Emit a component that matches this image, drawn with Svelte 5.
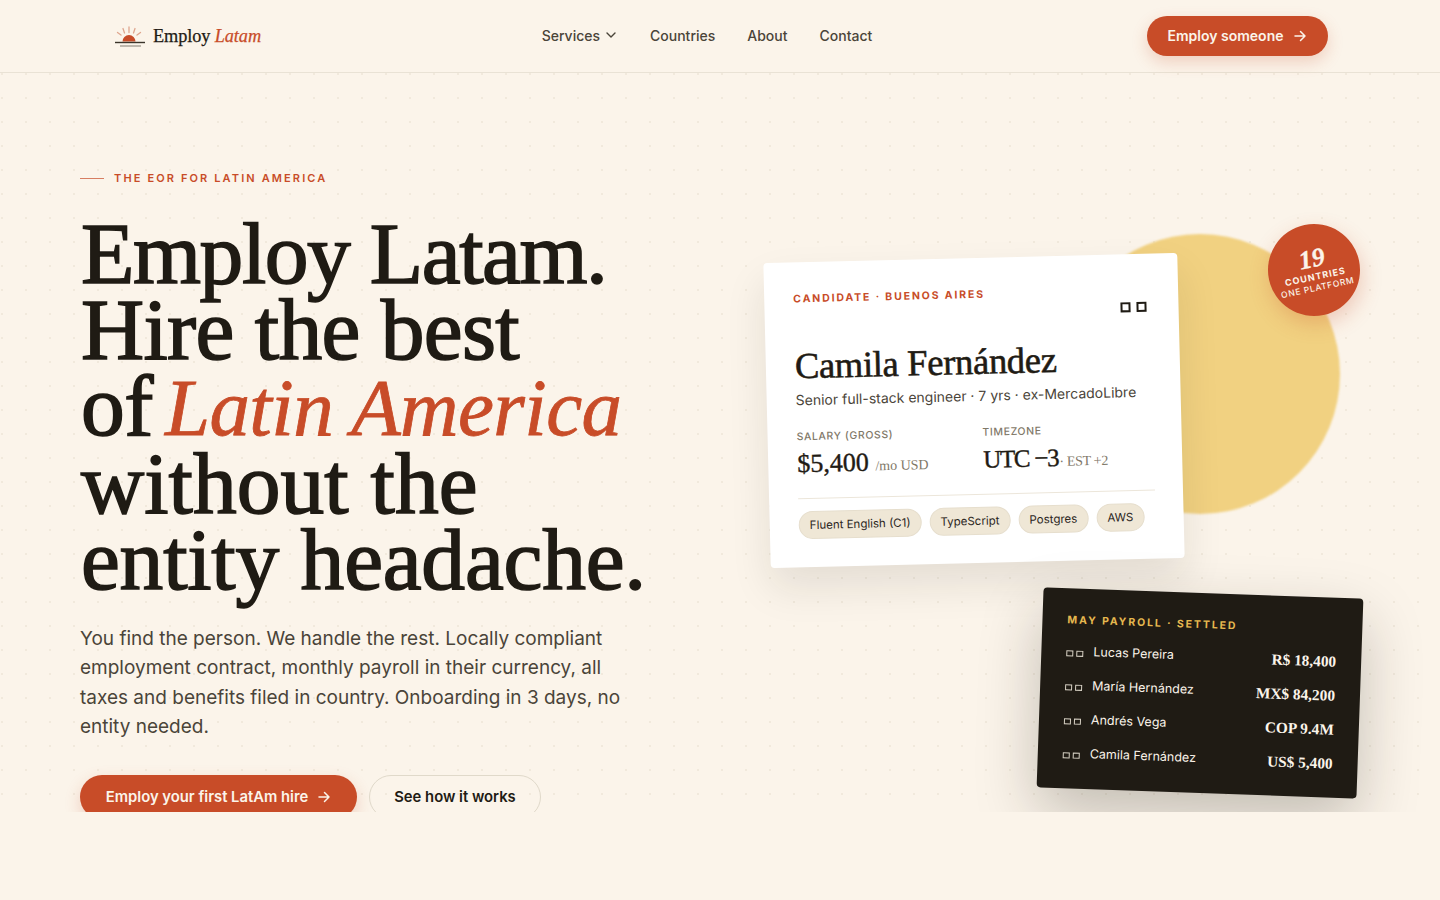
<script>
  const payroll = [
    { name: 'Lucas Pereira', amount: 'R$ 18,400' },
    { name: 'María Hernández', amount: 'MX$ 84,200' },
    { name: 'Andrés Vega', amount: 'COP 9.4M' },
    { name: 'Camila Fernández', amount: 'US$ 5,400' }
  ];
  const chips = ['Fluent English (C1)', 'TypeScript', 'Postgres', 'AWS'];
</script>

<div class="page">
  <header class="nav">
    <a class="logo" href="#top">
      <svg width="36" height="24" viewBox="0 0 36 24" fill="none">
        <path d="M10.500 17.500a6.500 6.500 0 0 1 13 0z" fill="#c84c28"/>
        <g stroke="#dfa68e" stroke-width="1.300" stroke-linecap="round">
          <path d="M17 3v5.500M11 4.500l1.500 4.500M23 4.500l-1.500 4.500M5.500 8.500l3.500 2.500M28.500 8.500l-3.500 2.500"/>
        </g>
        <path d="M3 18.500h30" stroke="#3a342a" stroke-width="1.400"/>
        <path d="M8 22h21" stroke="#9d978b" stroke-width="1.300"/>
      </svg>
      <span class="wordmark">Employ <em>Latam</em></span>
    </a>
    <nav class="links">
      <a href="#s" class="svc">Services
        <svg width="10" height="6" viewBox="0 0 10 6" fill="none"><path d="M1 1l4 4 4-4" stroke="#4a4439" stroke-width="1.400" stroke-linecap="round" stroke-linejoin="round"/></svg>
      </a>
      <a href="#c">Countries</a>
      <a href="#a">About</a>
      <a href="#k">Contact</a>
    </nav>
    <a class="btn primary small" href="#e">Employ someone
      <svg width="14" height="14" viewBox="0 0 14 14" fill="none"><path d="M2 7h10M7.500 2.500 12 7l-4.500 4.500" stroke="currentColor" stroke-width="1.500" stroke-linecap="round" stroke-linejoin="round"/></svg>
    </a>
  </header>

  <section class="hero">
    <div class="copy">
      <div class="eyebrow"><span class="rule"></span>THE EOR FOR LATIN AMERICA</div>
      <h1><span class="l1">Employ Latam.</span><span class="l2">Hire the best</span><span class="l3">of <em>Latin America</em></span><span class="l4">without the</span><span class="l5">entity headache.</span></h1>
      <p class="lede">You find the person. We handle the rest. Locally compliant employment contract, monthly payroll in their currency, all taxes and benefits filed in country. Onboarding in 3 days, no entity needed.</p>
      <div class="cta">
        <a class="btn primary big" href="#f">Employ your first LatAm hire
          <svg width="14" height="14" viewBox="0 0 14 14" fill="none"><path d="M2 7h10M7.500 2.500 12 7l-4.500 4.500" stroke="currentColor" stroke-width="1.500" stroke-linecap="round" stroke-linejoin="round"/></svg>
        </a>
        <a class="btn ghost" href="#h">See how it works</a>
      </div>
    </div>

    <div class="art">
      <div class="sun"></div>
      <article class="card">
        <div class="card-top">
          <span class="tag">CANDIDATE · BUENOS AIRES</span>
          <span class="boxes"><i></i><i></i></span>
        </div>
        <h2>Camila Fernández</h2>
        <p class="role">Senior full-stack engineer · 7 yrs · ex-MercadoLibre</p>
        <div class="facts">
          <div>
            <div class="label">SALARY (GROSS)</div>
            <div class="val">$5,400 <small>/mo USD</small></div>
          </div>
          <div>
            <div class="label">TIMEZONE</div>
            <div class="val tz">UTC −3 <small>· EST +2</small></div>
          </div>
        </div>
        <div class="chips">
          {#each chips as c}<span class="chip">{c}</span>{/each}
        </div>
      </article>
      <article class="dark">
        <div class="dark-tag">MAY PAYROLL · SETTLED</div>
        {#each payroll as r}
          <div class="row">
            <span class="who"><span class="mini"><i></i><i></i></span>{r.name}</span>
            <span class="amt">{r.amount}</span>
          </div>
        {/each}
      </article>
      <div class="badge">
        <b>19</b>
        <span class="b1">COUNTRIES</span>
        <span class="b2">ONE PLATFORM</span>
      </div>
    </div>
  </section>
</div>

<style>
  :global(body) { margin: 0; background: #fbf4ea; }
  .page { font-family: Inter, "Liberation Sans", sans-serif; color: #1f1b14; height: 900px; overflow: hidden; }
  a { text-decoration: none; color: inherit; }
  .nav { height: 73px; box-sizing: border-box; border-bottom: 1px solid #e9e2d5; display: flex; align-items: center; justify-content: space-between; padding: 0 112px; position: relative; z-index: 2; }
  .logo { display: flex; align-items: center; gap: 5px; width: 155px; }
  .wordmark { font-family: "Liberation Serif", serif; font-size: 18.300px; letter-spacing: -.1px; -webkit-text-stroke: .25px currentColor; white-space: nowrap; }
  .wordmark em { color: #c84c28; }
  .links { display: flex; gap: 32px; font-size: 14px; font-weight: 500; color: #4a4439; margin-bottom: 2px; }
  .svc { display: flex; align-items: center; gap: 6px; }
  .svc svg { margin-right: 2px; }
  .btn { display: inline-flex; align-items: center; justify-content: center; border-radius: 999px; font-weight: 600; box-sizing: border-box; }
  .primary { background: #c84c28; color: #fbf4ea; }
  .small { font-size: 14px; height: 40px; width: 181px; gap: 10px; padding-bottom: 1px; box-shadow: 0 6px 16px rgba(200,76,40,.22); }
  .hero { height: 739px; position: relative; overflow: hidden; background-image: radial-gradient(circle at 2px 1px, #f1e9dc 1px, transparent 1.300px); background-size: 24px 24px; display: flex; }
  .copy { width: 680px; padding: 98px 0 0 80px; box-sizing: border-box; flex: none; }
  .eyebrow { display: flex; align-items: center; gap: 10px; font-size: 11px; font-weight: 600; letter-spacing: 2.120px; color: #c84c28; line-height: 14px; }
  .rule { width: 24px; height: 1px; background: #c84c28; opacity: .7; }
  h1 { margin: 31px 0 0 1px; font-family: "Liberation Serif", serif; font-weight: 400; font-size: 87.500px; line-height: 76px; white-space: nowrap; -webkit-text-stroke: 1.600px #1f1b14; }
  h1 span { display: block; }
  .l1 { letter-spacing: -1.450px; }
  .l2 { letter-spacing: -.700px; }
  .l3 { letter-spacing: -.600px; }
  .l4 { letter-spacing: .040px; }
  .l5 { letter-spacing: -.220px; }
  h1 em { color: #c84c28; font-size: 81px; margin-left: -9px; -webkit-text-stroke: .8px #c84c28; }
  .lede { margin: 26px 0 0; width: 550px; font-size: 19px; line-height: 29.400px; color: #4a4439; }
  .cta { display: flex; gap: 12px; margin-top: 33px; }
  .big { font-size: 14.800px; height: 44px; width: 277px; gap: 9px; padding: 1px 0 0; box-shadow: 0 6px 16px rgba(200,76,40,.22); }
  .ghost { font-size: 14.800px; height: 44px; width: 172px; padding-top: 1px; border: 1px solid #e0d9ca; color: #1f1b14; }
  .art { position: relative; flex: 1; }
  .sun { position: absolute; left: 380px; top: 161px; width: 280px; height: 280px; border-radius: 50%; background: #f1d181; filter: blur(1px); }
  .card { position: absolute; left: 87px; top: 185px; width: 414px; height: 305px; box-sizing: border-box; background: #fff; border-radius: 4px; padding: 30px 28px 30px 29px; transform: rotate(-1.400deg); box-shadow: 0 20px 40px rgba(31,27,20,.1); }
  .card-top { display: flex; justify-content: space-between; align-items: flex-start; }
  .tag { font-size: 10.500px; font-weight: 700; letter-spacing: 1.860px; color: #c84c28; line-height: 14px; }
  .boxes { display: flex; gap: 6px; margin: 18px 4px 0 0; }
  .boxes i { width: 10px; height: 10px; box-sizing: border-box; border: 2px solid #1f1b14; display: block; }
  h2 { margin: 26px 0 0; font-family: "Liberation Serif", serif; font-weight: 400; font-size: 36.500px; line-height: 40px; letter-spacing: -.3px; -webkit-text-stroke: .6px #1f1b14; }
  .role { margin: 4px 0 0; font-size: 14px; line-height: 20px; color: #4a4439; }
  .facts { display: grid; grid-template-columns: 186px 1fr; margin-top: 20px; padding-bottom: 15px; border-bottom: 1px solid #ece6da; }
  .label { font-size: 10.500px; font-weight: 500; letter-spacing: .6px; color: #7f7868; line-height: 14px; }
  .val { font-family: "Liberation Serif", serif; font-size: 26px; line-height: 30px; margin-top: 5px; -webkit-text-stroke: .4px currentColor; }
  .val small { font-size: 14px; color: #7f7868; -webkit-text-stroke: 0; }
  .tz { letter-spacing: -1.300px; font-size: 25px; }
  .tz small { margin-left: -4px; letter-spacing: -.3px; }
  .chips { display: flex; gap: 8px; margin-top: 12px; }
  .chip { background: #efe7d6; border: 1px solid #e6decd; border-radius: 999px; font-size: 11.500px; line-height: 16px; padding: 5px 10px; color: #2b261d; }
  .dark { position: absolute; left: 360px; top: 520px; width: 320px; height: 200px; box-sizing: border-box; background: #1f1b14; border-radius: 4px; padding: 25px 25px; color: #fbf4ea; transform: rotate(2deg); box-shadow: 0 24px 60px rgba(31,27,20,.25); }
  .dark-tag { font-size: 10.500px; font-weight: 700; letter-spacing: 1.900px; color: #e6b84f; line-height: 14px; margin-bottom: 15px; }
  .row { display: flex; justify-content: space-between; align-items: flex-start; height: 34px; }
  .who { display: flex; align-items: center; gap: 10px; font-size: 12.500px; line-height: 18px; }
  .mini { display: flex; gap: 3px; position: relative; top: 2px; }
  .mini i { width: 7px; height: 6px; display: block; border: 1px solid #d8d2c5; box-sizing: border-box; }
  .amt { font-family: "Liberation Serif", serif; font-weight: 700; font-size: 15.300px; line-height: 20px; margin-top: 0; }
  .badge { position: absolute; left: 588px; top: 151px; width: 92px; height: 92px; border-radius: 50%; background: #c84c28; color: #fbf4ea; display: flex; flex-direction: column; align-items: center; justify-content: center; transform: rotate(-12deg); box-shadow: 0 8px 20px rgba(200,76,40,.25); }
  .badge b { font-family: "Liberation Serif", serif; font-style: italic; font-size: 26px; line-height: 25px; -webkit-text-stroke: .3px currentColor; }
  .b1 { font-size: 9px; font-weight: 700; letter-spacing: 1px; line-height: 11px; }
  .b2 { font-size: 8.500px; font-weight: 500; letter-spacing: .7px; line-height: 11px; margin-top: 1px; }
</style>
